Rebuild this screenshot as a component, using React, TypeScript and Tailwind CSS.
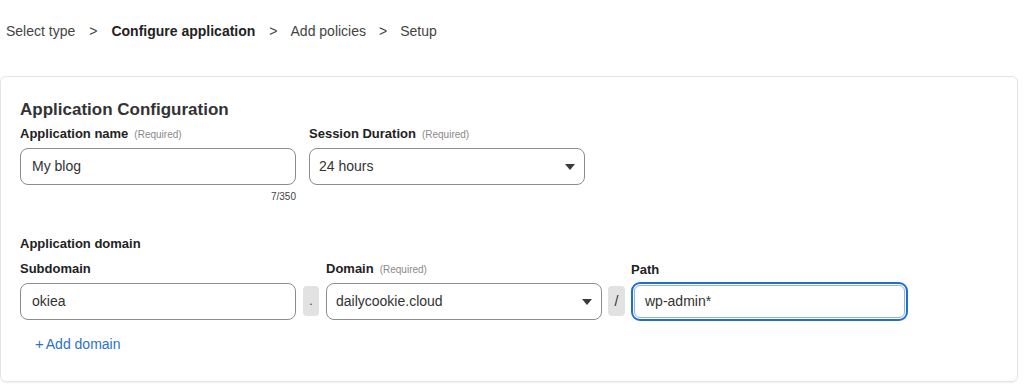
import React from "react";

const Caret = () => (
  <svg width="10" height="6" viewBox="0 0 10 6" className="shrink-0">
    <path d="M0 0 L10 0 L5 6 Z" fill="#3a3a3a" />
  </svg>
);

const Req = () => (
  <span className="ml-[6px] text-[10px] font-normal text-[#8a8a8a]">(Required)</span>
);

export default function App() {
  return (
    <div
      className="w-[1024px] h-[386px] bg-white text-[#333] overflow-hidden"
      style={{ fontFamily: '"Liberation Sans", Arial, sans-serif' }}
    >
      <div className="flex items-center h-[62px] pl-[6px] text-[14px] text-[#444]">
        <span>Select type</span>
        <span className="ml-[14px] mr-[14px]">&gt;</span>
        <span className="font-bold text-[#222]">Configure application</span>
        <span className="ml-[14px] mr-[13px]">&gt;</span>
        <span>Add policies</span>
        <span className="ml-[13px] mr-[13px]">&gt;</span>
        <span>Setup</span>
      </div>
      <div className="mt-[14px] w-[1018px] h-[306px] rounded-[6px] border border-[#e4e4e4] shadow-[0_1px_2px_rgba(0,0,0,0.06)] pl-[19px] pt-[22px]">
        <h2 className="text-[17px] font-bold text-[#333] leading-[22px]">Application Configuration</h2>
        <div className="flex gap-[13px] mt-[3px]">
          <div className="w-[276px]">
            <div className="h-[20px] flex items-center text-[13px] font-bold text-[#222]">
              Application name <Req />
            </div>
            <div className="mt-[4px] h-[37px] rounded-[8px] border border-[#8c8c8c] flex items-center pl-[11px] text-[14px] text-[#333]">
              My blog
            </div>
            <div className="text-right text-[10px] text-[#444] mt-[4px]">7/350</div>
          </div>
          <div className="w-[276px]">
            <div className="h-[20px] flex items-center text-[13px] font-bold text-[#222]">
              Session Duration <Req />
            </div>
            <div className="mt-[4px] h-[37px] rounded-[8px] border border-[#8c8c8c] flex items-center justify-between pl-[9px] pr-[9px] text-[14px] text-[#333]">
              <span>24 hours</span>
              <Caret />
            </div>
          </div>
        </div>
        <div className="mt-[31px] text-[13px] font-bold text-[#222] h-[18px] flex items-center">
          Application domain
        </div>
        <div className="flex items-end mt-[6px]">
          <div className="w-[276px]">
            <div className="h-[20px] flex items-center text-[13px] font-bold text-[#222]">Subdomain</div>
            <div className="mt-[4px] h-[37px] rounded-[8px] border border-[#8c8c8c] flex items-center pl-[11px] text-[14px] text-[#333]">
              okiea
            </div>
          </div>
          <div className="ml-[7px] mr-[7px] mb-[4px] w-[16px] h-[30px] rounded-[4px] bg-[#e2e2e2] flex items-center justify-center text-[12px] text-[#333]">
            .
          </div>
          <div className="w-[276px]">
            <div className="h-[20px] flex items-center text-[13px] font-bold text-[#222]">
              Domain <Req />
            </div>
            <div className="mt-[4px] h-[37px] rounded-[8px] border border-[#8c8c8c] flex items-center justify-between pl-[9px] pr-[9px] text-[14px] text-[#333]">
              <span>dailycookie.cloud</span>
              <Caret />
            </div>
          </div>
          <div className="ml-[6px] mr-[6px] mb-[4px] w-[17px] h-[30px] rounded-[4px] bg-[#e2e2e2] flex items-center justify-center text-[14px] text-[#333]">
            /
          </div>
          <div className="w-[277px]">
            <div className="h-[20px] flex items-center text-[13px] font-bold text-[#222]">Path</div>
            <div className="mt-[2px] h-[39px] mb-[-1px] rounded-[9px] border-2 border-[#1f6fd1] p-[1px]">
              <div className="h-full rounded-[6px] border border-[#8fb4e6] flex items-center pl-[10px] text-[14px] text-[#333]">
                wp-admin*
              </div>
            </div>
          </div>
        </div>
        <div className="mt-[13px] ml-[15px] text-[14px] text-[#2a72c8] flex items-center">
          <span className="mr-[2px] text-[15px]">+</span>Add domain
        </div>
      </div>
    </div>
  );
}
